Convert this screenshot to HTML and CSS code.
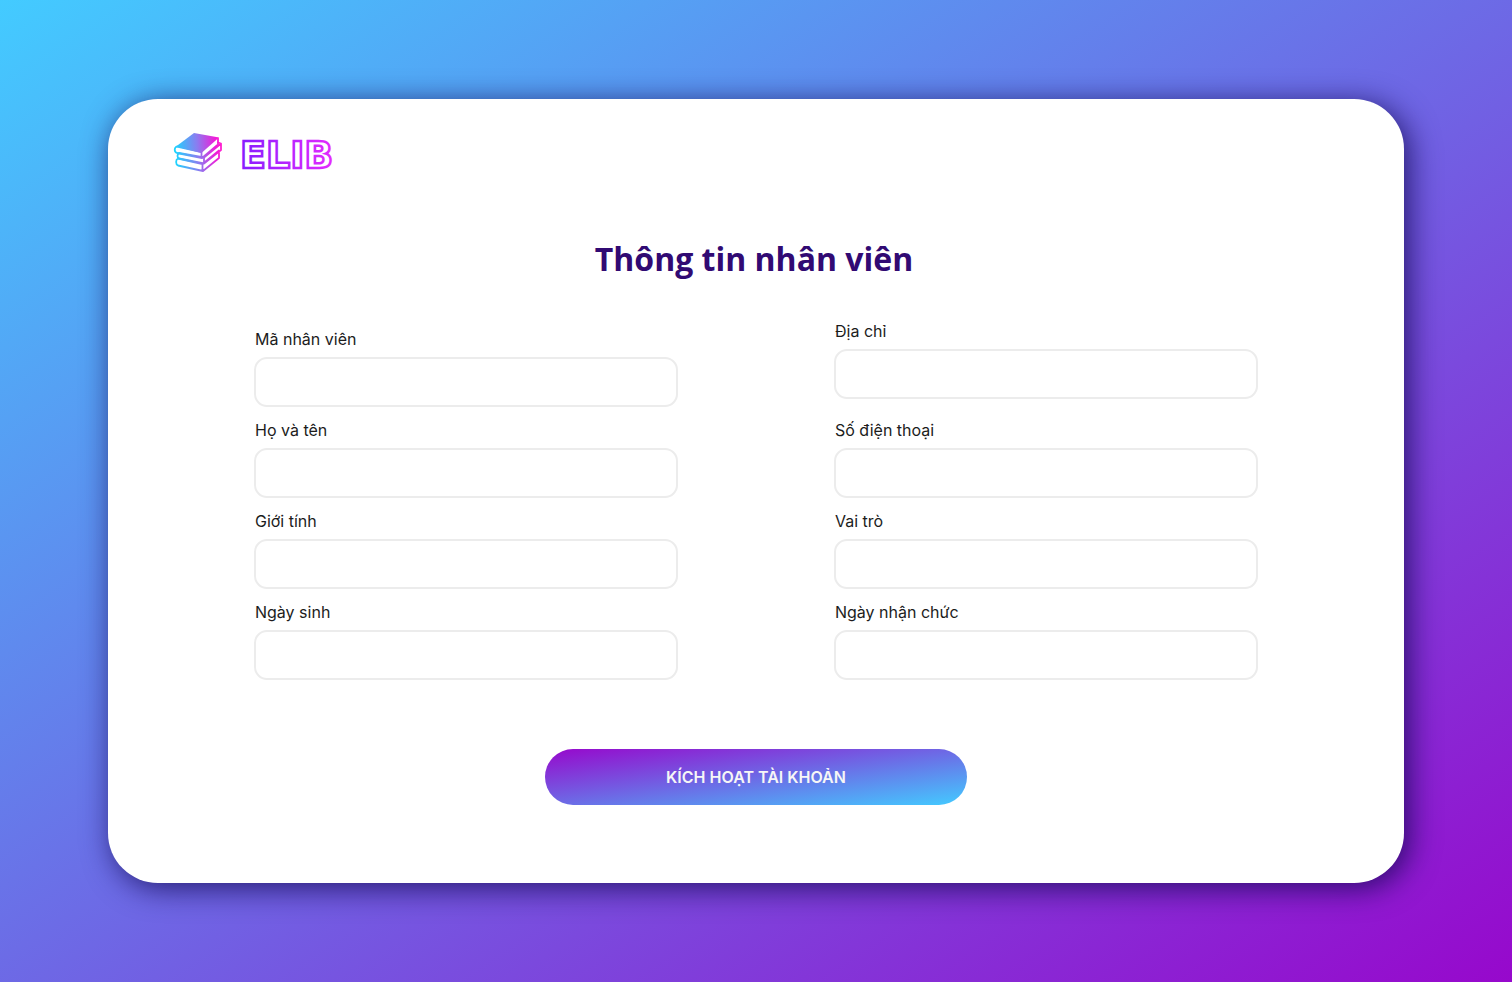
FILE: index.html
```html
<!DOCTYPE html>
<html lang="vi">
<head>
<meta charset="utf-8">
<meta name="viewport" content="width=device-width, initial-scale=1">
<title>ELIB – Thông tin nhân viên</title>
<link rel="stylesheet" href="styles.css">
</head>
<body>
<main class="card">
  <header class="brand">
    <svg class="brand-books" viewBox="0 0 50 40" aria-hidden="true">
      <defs>
        <linearGradient id="books" gradientUnits="userSpaceOnUse" x1="1" y1="20" x2="48" y2="16">
          <stop offset="0" stop-color="#19d8ff"/>
          <stop offset="0.5" stop-color="#8a7df0"/>
          <stop offset="0.9" stop-color="#f01cd8"/>
          <stop offset="1" stop-color="#ff1fd0"/>
        </linearGradient>
      </defs>
      <g fill="none" stroke="url(#books)" stroke-width="1.8" stroke-linejoin="round" stroke-linecap="round">
        <path d="M5 25.500C2.500 26.500 2.500 31.500 5 32.500L30 38L46 25V20M5 25.500L29.500 31L46 17.500M29.500 31V37.500"/>
        <path d="M6 20C4 21.500 4 24.500 6 25.500L31 30.500L48 17V10.500L45 9.500M6 20L31 24.500L47.500 11M31 24.500V30.500"/>
        <path d="M4 13.500C1 14.500 1 19 4 20L29 25L45 11.500V5.500M4 13.500L28.500 19M28.500 19V24.500"/>
      </g>
      <path fill="url(#books)" d="M3 13.500L21 0L46 4.500L28.500 20Z"/>
    </svg>
    <svg class="brand-name" viewBox="0 0 116 52" role="img" aria-label="ELIB">
      <defs>
        <linearGradient id="word" gradientUnits="userSpaceOnUse" x1="0" y1="0" x2="104" y2="0">
          <stop offset="0" stop-color="#861cff"/>
          <stop offset="1" stop-color="#ef2cff"/>
        </linearGradient>
      </defs>
      <text class="brand-text" x="0" y="41" fill="none" stroke="url(#word)" stroke-width="2.5">ELIB</text>
    </svg>
  </header>

  <h1 class="title">Thông tin nhân viên</h1>

  <form class="form">
    <div class="columns">
      <div class="column">
        <div class="field"><label for="code">Mã nhân viên</label><input id="code" type="text"></div>
        <div class="field"><label for="name">Họ và tên</label><input id="name" type="text"></div>
        <div class="field"><label for="gender">Giới tính</label><input id="gender" type="text"></div>
        <div class="field"><label for="birth">Ngày sinh</label><input id="birth" type="text"></div>
      </div>
      <div class="column">
        <div class="field field-lead"><label for="address">Địa chỉ</label><input id="address" type="text"></div>
        <div class="field"><label for="phone">Số điện thoại</label><input id="phone" type="tel"></div>
        <div class="field"><label for="role">Vai trò</label><input id="role" type="text"></div>
        <div class="field"><label for="start">Ngày nhận chức</label><input id="start" type="text"></div>
      </div>
    </div>
    <button class="submit" type="submit">KÍCH HOẠT TÀI KHOẢN</button>
  </form>
</main>
</body>
</html>
```

FILE: styles.css
```css
* {
  box-sizing: border-box;
}

body {
  margin: 0;
  min-height: 100vh;
  padding: 24px 108px;
  display: flex;
  align-items: center;
  background: linear-gradient(to bottom right, #43cbff, #9708cc);
  font-family: Inter, "Liberation Sans", sans-serif;
  font-size: 16px;
  line-height: 20px;
  color: #1c1c1c;
}

.card {
  flex: 1;
  min-width: 0;
  padding: 28px 65px 78px;
  border-radius: 50px;
  background: #fff;
  box-shadow: 5px 5px 30px rgba(18, 8, 82, 0.8);
}

.brand {
  display: flex;
  align-items: center;
  gap: 17px;
}

.brand-books {
  width: 50px;
  height: 40px;
}

.brand-name {
  width: 116px;
  height: 52px;
}

.brand-text {
  font-family: "DejaVu Sans", sans-serif;
  font-weight: 700;
  font-size: 38px;
}

.title {
  margin: 57px 4px 39px 0;
  font-family: "Open Sans", sans-serif;
  font-weight: 700;
  font-size: 32px;
  line-height: 46px;
  text-align: center;
  color: #310a73;
}

.form {
  display: flex;
  flex-direction: column;
  align-items: center;
  gap: 69px;
}

.columns {
  width: 100%;
  max-width: 1004px;
  display: grid;
  grid-template-columns: 1fr 1fr;
  align-items: end;
  column-gap: 156px;
}

.column {
  display: flex;
  flex-direction: column;
  gap: 13px;
}

.field {
  display: flex;
  flex-direction: column;
  gap: 8px;
}

.field-lead {
  margin-bottom: 8px;
}

.field label {
  padding-left: 1px;
}

.field input {
  width: 100%;
  height: 50px;
  padding: 0 16px;
  border: 2px solid #ececec;
  border-radius: 13px;
  background: #fff;
  font: inherit;
  color: inherit;
}

.submit {
  width: 100%;
  max-width: 422px;
  height: 56px;
  border: 0;
  border-radius: 28px;
  background: linear-gradient(to top left, #43cbff, #9708cc);
  font: inherit;
  font-weight: 600;
  color: #f6f6f6;
  cursor: pointer;
}
```
